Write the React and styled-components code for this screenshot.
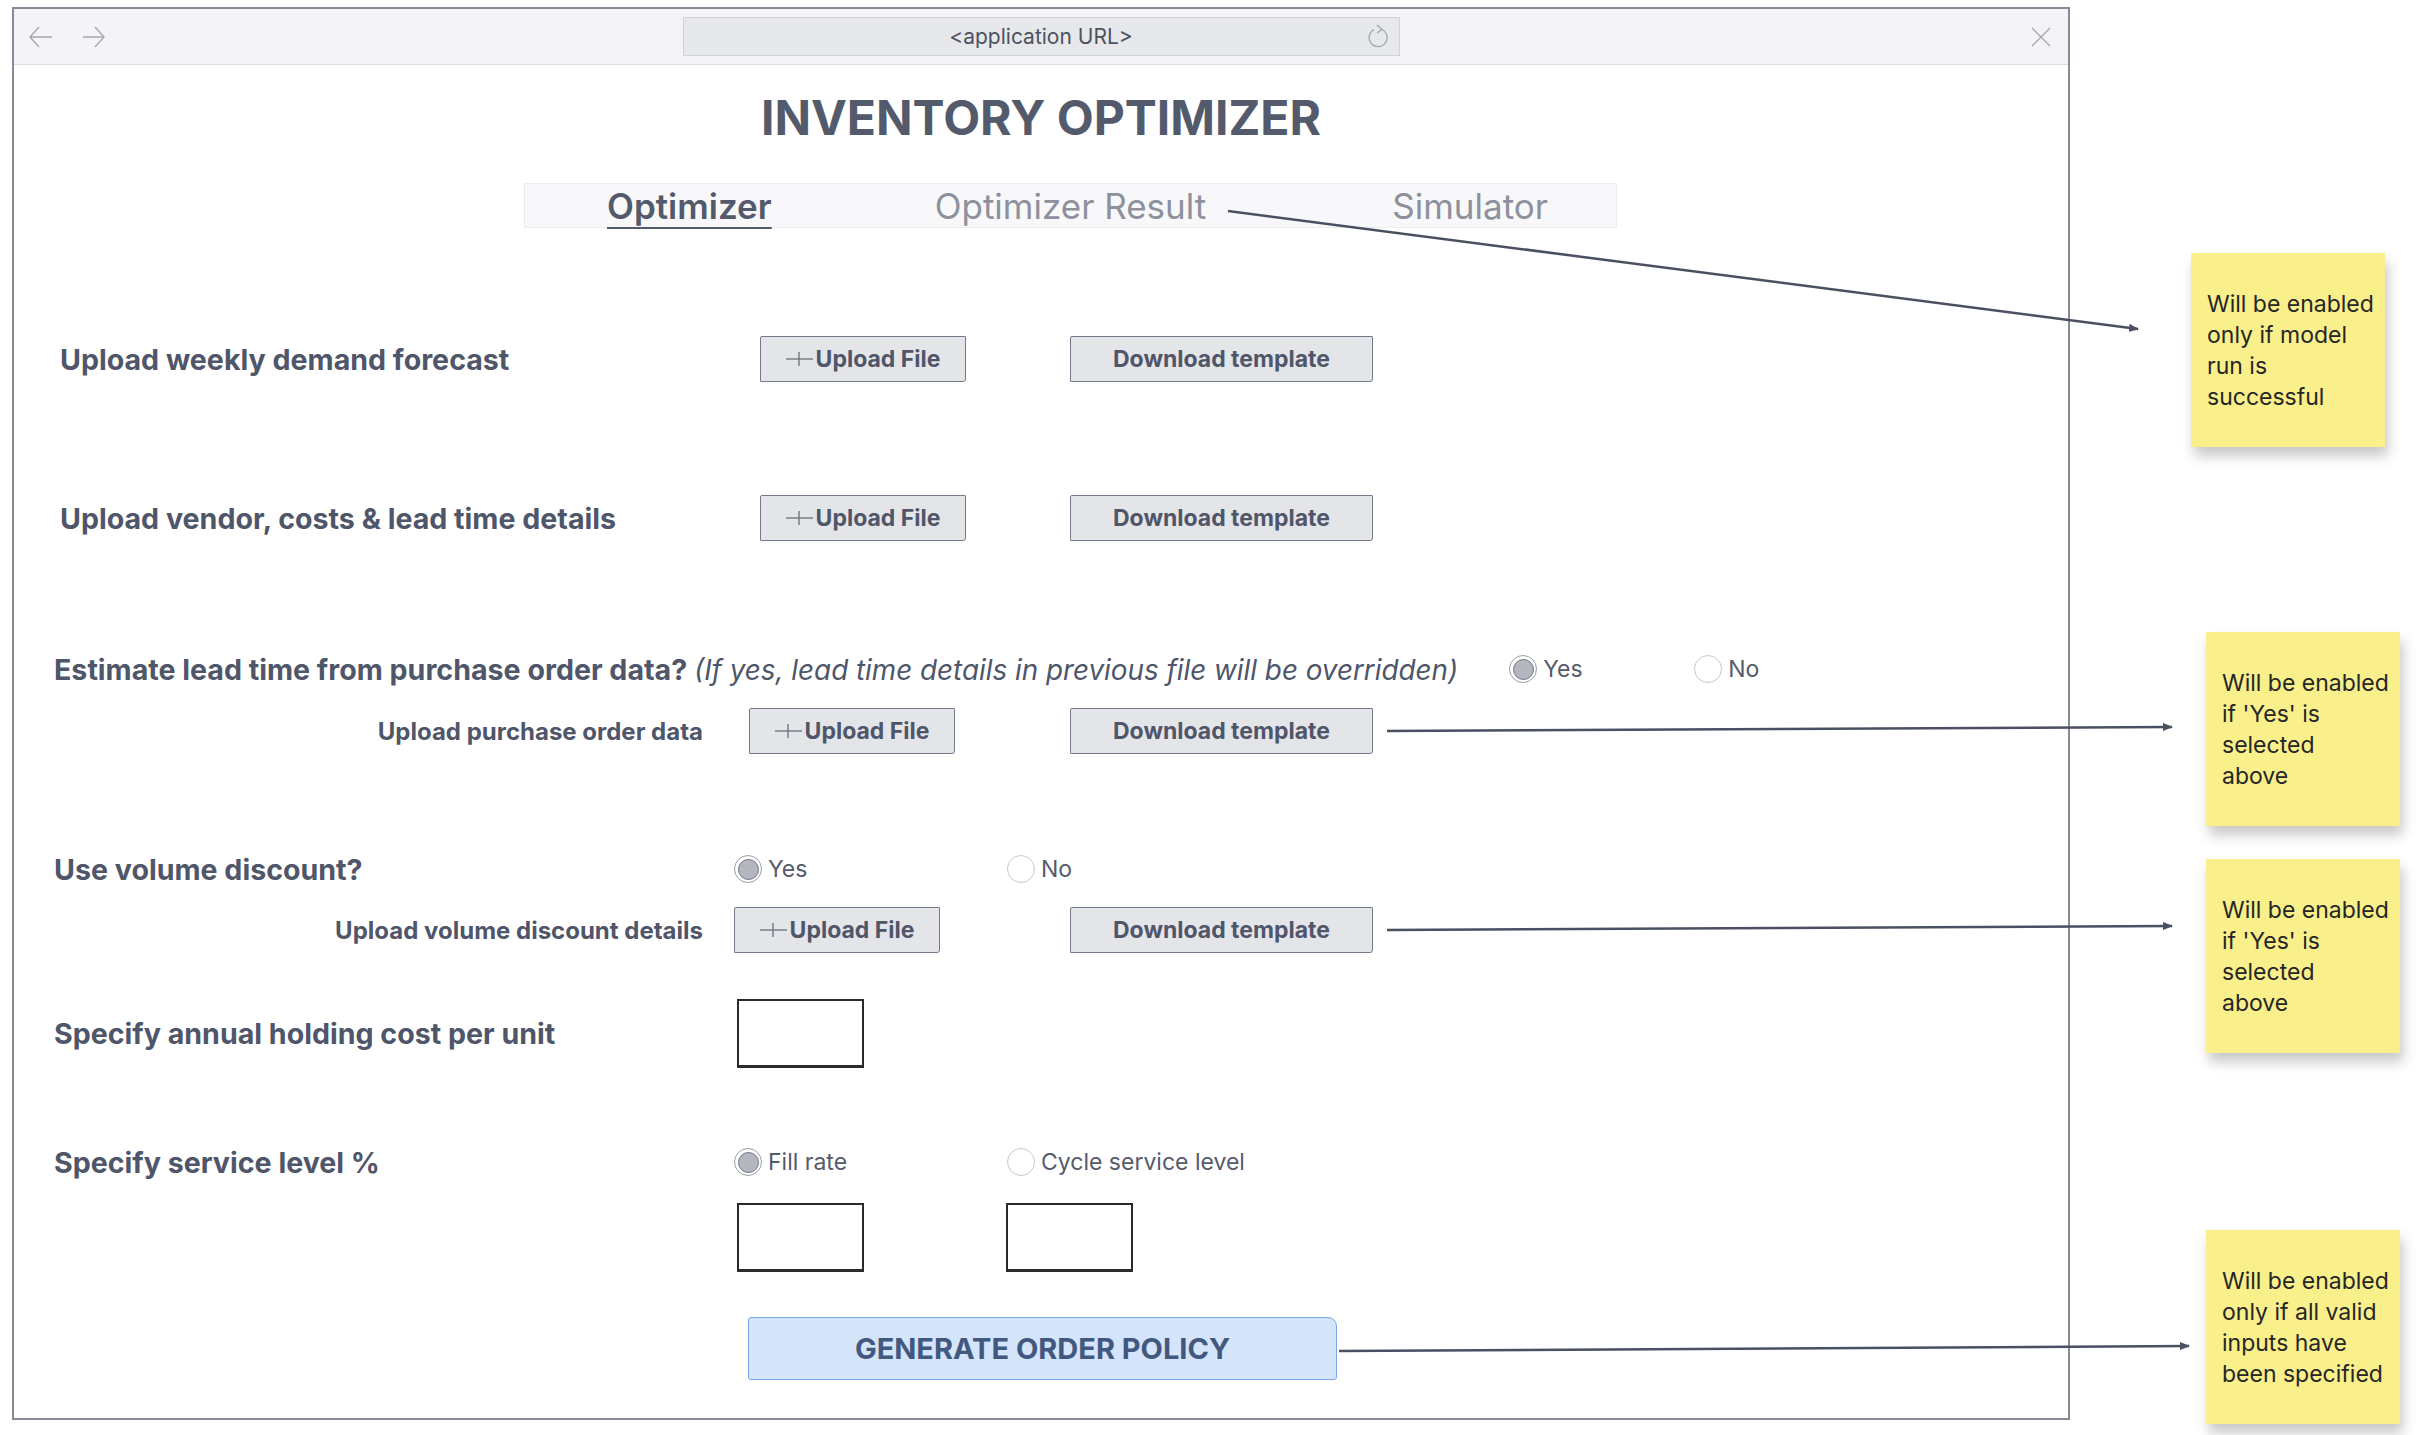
import React from "react";
import styled, { createGlobalStyle } from "styled-components";

const GlobalStyle = createGlobalStyle`
  html, body {
    margin: 0;
    padding: 0;
    background: #ffffff;
  }
  body {
    font-family: Inter, "Noto Sans", sans-serif;
    overflow: hidden;
  }
  * {
    box-sizing: border-box;
  }
`;

const Canvas = styled.div`
  position: relative;
  width: 2419px;
  height: 1435px;
  padding: 7px 0 0 12px;
`;

const Window = styled.div`
  width: 2058px;
  height: 1413px;
  border: 2px solid #868b97;
  background: #fff;
  display: flex;
  flex-direction: column;
`;

const Toolbar = styled.div`
  height: 56px;
  flex-shrink: 0;
  background: #f4f4f6;
  border-bottom: 1px solid #dcdde2;
  display: grid;
  grid-template-columns: 1fr 717px 1fr;
  align-items: center;
`;

const Nav = styled.div`
  display: flex;
  align-items: center;
  gap: 30px;
  padding-left: 15px;
`;

const Close = styled.div`
  display: flex;
  justify-content: flex-end;
  padding-right: 17px;
`;

const Address = styled.div`
  height: 39px;
  background: #e7e8ec;
  border: 1px solid #d2d3d8;
  display: flex;
  align-items: center;
  justify-content: center;
  position: relative;
  font-size: 21px;
  color: #4d5260;
`;

const Reload = styled.span`
  position: absolute;
  right: 9px;
  top: 6px;
  display: flex;
`;

const Content = styled.main`
  padding: 0 40px;
  display: flex;
  flex-direction: column;
  color: #4f566a;
`;

const Title = styled.h1`
  margin: 25px 0 0;
  font-size: 48px;
  line-height: 56px;
  font-weight: 700;
  text-align: center;
  color: #535a6c;
`;

const Tabs = styled.nav`
  align-self: flex-start;
  margin: 37px 0 0 470px;
  width: 1093px;
  height: 45px;
  background: #f8f8fa;
  border: 1px solid #ededf0;
  display: flex;
  align-items: center;
  padding: 0 0 0 82px;
`;

const Tab = styled.span`
  margin-left: ${(p) => p.$ml || 0}px;
  font-size: 35px;
  line-height: 40px;
  font-weight: ${(p) => (p.$active ? 600 : 400)};
  color: ${(p) => (p.$active ? "#535a6c" : "#8d919d")};
  text-decoration: ${(p) => (p.$active ? "underline" : "none")};
  text-decoration-thickness: 2px;
  text-underline-offset: 8px;
`;

const Row = styled.div`
  display: flex;
  align-items: center;
  height: ${(p) => p.$h}px;
  margin-top: ${(p) => p.$mt}px;
`;

const Label = styled.div`
  flex: 0 0 ${(p) => (p.$w ? p.$w + "px" : "auto")};
  padding-left: ${(p) => p.$pl || 0}px;
  margin-right: ${(p) => p.$mr || 0}px;
  text-align: ${(p) => (p.$right ? "right" : "left")};
  font-size: ${(p) => (p.$small ? 24 : 28.6)}px;
  font-weight: 700;
  white-space: nowrap;
  color: #4f566a;
`;

const Hint = styled.i`
  font-weight: 400;
  font-size: 27.8px;
`;

const Button = styled.button`
  flex: 0 0 ${(p) => p.$w}px;
  height: 46px;
  margin-right: ${(p) => p.$mr || 0}px;
  padding: 0;
  background: #e4e5e9;
  border: 1.5px solid #747989;
  border-radius: 2px 1px 3px 1px;
  font-family: Inter, sans-serif;
  font-size: 23px;
  font-weight: 700;
  color: #4f566a;
  display: flex;
  align-items: center;
  justify-content: center;
  gap: 3px;
`;

const Option = styled.label`
  flex: 0 0 ${(p) => (p.$w ? p.$w + "px" : "auto")};
  display: flex;
  align-items: center;
  gap: 6px;
  font-size: 23px;
  color: #555b6b;
`;

const Dot = styled.span`
  width: 28px;
  height: 28px;
  border-radius: 50%;
  border: 1.5px solid ${(p) => (p.$on ? "#9a9ea8" : "#c6c8ce")};
  background: #fff;
  display: flex;
  align-items: center;
  justify-content: center;

  &::after {
    content: "";
    display: ${(p) => (p.$on ? "block" : "none")};
    width: 19px;
    height: 19px;
    border-radius: 50%;
    background: #b4b7bf;
    border: 1.5px solid #6f7380;
  }
`;

const Field = styled.input`
  flex: 0 0 127px;
  width: 127px;
  min-width: 0;
  height: 69px;
  padding: 0;
  margin: 0 ${(p) => p.$mr || 0}px 0 0;
  border: 2px solid #2b2b2b;
  border-bottom-width: 3px;
  background: #fff;
  outline: none;
`;

const Spacer = styled.div`
  flex: 0 0 ${(p) => p.$w}px;
`;

const Generate = styled.button`
  align-self: flex-start;
  margin: 45px 0 0 694px;
  width: 589px;
  height: 63px;
  background: #d4e4fb;
  border: 1.5px solid #7aa5e8;
  border-radius: 3px 9px 3px 3px;
  font-family: Inter, sans-serif;
  font-size: 29px;
  font-weight: 700;
  color: #42587f;
`;

const Note = styled.div`
  position: absolute;
  left: ${(p) => p.$x}px;
  top: ${(p) => p.$y}px;
  width: 194px;
  height: 194px;
  background: #f9ef8b;
  padding: 36px 6px 0 16px;
  font-size: 23px;
  line-height: 31px;
  color: #262626;
  white-space: nowrap;
  box-shadow: 3px 9px 12px rgba(0, 0, 0, 0.22);
`;

const Overlay = styled.svg`
  position: absolute;
  left: 0;
  top: 0;
  width: 2419px;
  height: 1435px;
  pointer-events: none;
`;

const Plus = () => (
  <svg width="27" height="16" viewBox="0 0 27 16">
    <line x1="0" y1="8" x2="27" y2="8" stroke="#6b6f7a" strokeWidth="1.3" />
    <line x1="13" y1="1" x2="13" y2="15" stroke="#6b6f7a" strokeWidth="1.3" />
  </svg>
);

const UploadButton = ({ mr }) => (
  <Button $w={206} $mr={mr}>
    <Plus />
    Upload File
  </Button>
);

const DownloadButton = () => <Button $w={303}>Download template</Button>;

const Radio = ({ on, w, children }) => (
  <Option $w={w}>
    <Dot $on={on} />
    {children}
  </Option>
);

const arrows = [
  [1228, 211, 2138, 329],
  [1387, 731, 2172, 727],
  [1387, 930, 2172, 926],
  [1339, 1351, 2189, 1346],
];

const App = () => {
  return (
    <Canvas>
      <GlobalStyle />
      <Window>
        <Toolbar>
          <Nav>
            <svg width="24" height="22" viewBox="0 0 24 22">
              <path d="M23 11H1M10 1L1 11l9 10" fill="none" stroke="#a4a7b0" strokeWidth="1.3" />
            </svg>
            <svg width="22" height="22" viewBox="0 0 22 22">
              <path d="M0 11h21M12 1l9 10-9 10" fill="none" stroke="#a4a7b0" strokeWidth="1.3" />
            </svg>
          </Nav>
          <Address>
            &lt;application URL&gt;
            <Reload>
              <svg width="22" height="26" viewBox="0 0 22 26">
                <path d="M14 5.5A9 9 0 1 1 6 5.6" fill="none" stroke="#a4a7b0" strokeWidth="1.3" />
                <path d="M9 1l5 4.5-5 3.5" fill="none" stroke="#a4a7b0" strokeWidth="1.3" />
              </svg>
            </Reload>
          </Address>
          <Close>
            <svg width="20" height="20" viewBox="0 0 20 20">
              <path d="M1 1l18 18M19 1L1 19" stroke="#a4a7b0" strokeWidth="1.3" />
            </svg>
          </Close>
        </Toolbar>

        <Content>
          <Title>INVENTORY OPTIMIZER</Title>
          <Tabs>
            <Tab $active>Optimizer</Tab>
            <Tab $ml={163}>Optimizer Result</Tab>
            <Tab $ml={186}>Simulator</Tab>
          </Tabs>

          <Row $h={46} $mt={108}>
            <Label $w={706} $pl={6}>Upload weekly demand forecast</Label>
            <UploadButton mr={104} />
            <DownloadButton />
          </Row>

          <Row $h={46} $mt={113}>
            <Label $w={706} $pl={6}>Upload vendor, costs &amp; lead time details</Label>
            <UploadButton mr={104} />
            <DownloadButton />
          </Row>

          <Row $h={34} $mt={111}>
            <Label $mr={51}>
              Estimate lead time from purchase order data?{" "}
              <Hint>(If yes, lead time details in previous file will be overridden)</Hint>
            </Label>
            <Radio on w={185}>Yes</Radio>
            <Radio>No</Radio>
          </Row>

          <Row $h={46} $mt={22}>
            <Label $w={649} $mr={46} $right $small>Upload purchase order data</Label>
            <UploadButton mr={115} />
            <DownloadButton />
          </Row>

          <Row $h={34} $mt={98}>
            <Label $w={680}>Use volume discount?</Label>
            <Radio on w={273}>Yes</Radio>
            <Radio>No</Radio>
          </Row>

          <Row $h={46} $mt={21}>
            <Label $w={649} $mr={31} $right $small>Upload volume discount details</Label>
            <UploadButton mr={130} />
            <DownloadButton />
          </Row>

          <Row $h={69} $mt={46}>
            <Label $w={683}>Specify annual holding cost per unit</Label>
            <Field readOnly />
          </Row>

          <Row $h={34} $mt={77}>
            <Label $w={680}>Specify service level %</Label>
            <Radio on w={273}>Fill rate</Radio>
            <Radio>Cycle service level</Radio>
          </Row>

          <Row $h={69} $mt={24}>
            <Spacer $w={683} />
            <Field readOnly $mr={142} />
            <Field readOnly />
          </Row>

          <Generate>GENERATE ORDER POLICY</Generate>
        </Content>
      </Window>

      <Overlay viewBox="0 0 2419 1435">
        <defs>
          <marker id="head" markerWidth="10" markerHeight="8" refX="9" refY="4" orient="auto" markerUnits="userSpaceOnUse">
            <path d="M0 0L10 4L0 8z" fill="#4a5061" />
          </marker>
        </defs>
        {arrows.map(([x1, y1, x2, y2], i) => (
          <line key={i} x1={x1} y1={y1} x2={x2} y2={y2} stroke="#4a5061" strokeWidth="2.5" markerEnd="url(#head)" />
        ))}
      </Overlay>

      <Note $x={2191} $y={253}>
        Will be enabled<br />only if model<br />run is<br />successful
      </Note>
      <Note $x={2206} $y={632}>
        Will be enabled<br />if 'Yes' is<br />selected<br />above
      </Note>
      <Note $x={2206} $y={859}>
        Will be enabled<br />if 'Yes' is<br />selected<br />above
      </Note>
      <Note $x={2206} $y={1230}>
        Will be enabled<br />only if all valid<br />inputs have<br />been specified
      </Note>
    </Canvas>
  );
};

export default App;
